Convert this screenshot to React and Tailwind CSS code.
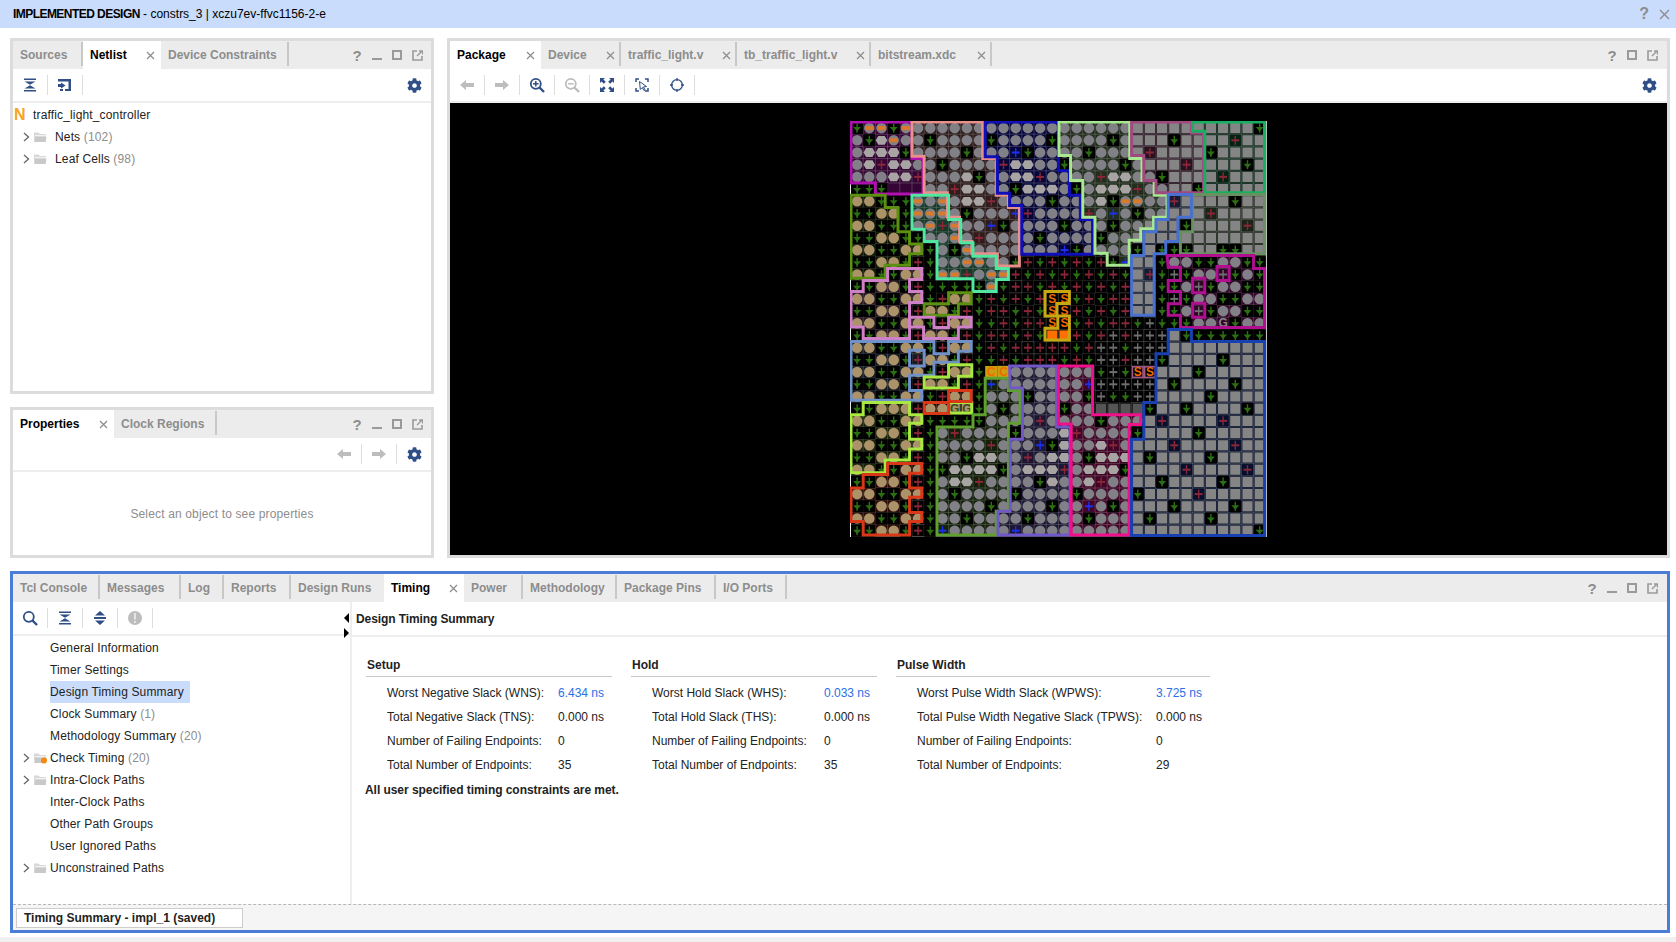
import React from "react";
import { FaCog } from "react-icons/fa";

const NAVY = "#2f4f86";
const P = 12.2;

// package balls, 34 x 34. g green, r red, w gray, b blue pins; o gray ball, H light ball,
// O tan ball, s square, a orange bar, S/C/G letters, E dark square, n empty
const ROWS = [
  "gaagaoooooooooooo" + "oooooossssssssssg",
  "ogHaoogoooogoooog" + "oooogosssgssssrss",
  "oHHHgoooogooobgoo" + "oogooosrssssgssss",
  "oHrHHoogoooorHHoo" + "goooogosssrssssgs",
  "oooHHroooHgooHHro" + "ooorHHoogssssrsss",
  "gggnnnoorHHoogHHH" + "ogoHHHroossgsssss",
  "OOgggaoaoHHroooog" + "oooHgaaoorssssgss",
  "ggOOgaaaogooobroo" + "oorobogoosssrssss",
  "OOgggoaraoobgoooo" + "gooogoosssgssssrs",
  "ggOOggooaoroooogo" + "ooogoosssssssssss",
  "OOggOOgogaooooooo" + "bgoooogsgggssggss",
  "ggOOgrgooaaoogrgr" + "grgrgbssgooggoogg",
  "OOggOOgaaroaargrg" + "rgrgrgsrgwgoowgog",
  "ggOOgrgggggagrrgr" + "grgrgrssggowgoogg",
  "OOggOOgrOOgrgrgrS" + "Sgrgrrssgwgooggoo",
  "ggOOgrOOgrgrrgrgS" + "Srgrgrssggowgoogg",
  "OOggOOgrOOggrgrrS" + "Sgrgrrgwgggooqgoo",
  "ggOOgrOOgrgrrgrgB" + "Brgrwrwwwsggggggg",
  "OOggOOgrOOgrgrrrr" + "rgrwwgwwwssssssss",
  "ggOOgrOOgrggrgrrr" + "grgwwrwwgssssgsss",
  "OOggOOgrOOgCCoooo" + "ooogwgmmsssgsssss",
  "ggOOgrOOgrgbooooo" + "oobwwwwwsgssssgss",
  "OOggOOgrOOgooogoo" + "oogwggwwssssgssss",
  "ggOOOrOOLLgogoooo" + "gooEEEEgssgssssgs",
  "OOggOOgggggooooro" + "ooogooosrssssrsss",
  "ggOOgrgoroooogooo" + "Hroooogssssgsssss",
  "OOggOOgoooorooobg" + "HooHrosssrssssrss",
  "ggOOgrgoogHHooroH" + "HogHHHsgssssgssss",
  "OOggOOggHHHHgoHHH" + "roHHHgssssrssssrs",
  "ggOOgrgoHHroooogH" + "ooHroossgssssgsss",
  "OOggOOgogoooogooo" + "ogoooogssssrsssss",
  "ggOOgrgoooogoooog" + "oobogosssgssssgss",
  "OOggOOgoogoooogoo" + "oogooosgssssgssss",
  "ggOOgrgbooooobooo" + "oooooossssssssssg",
];

// pblocks, in grid units
const REGIONS = [
  { c: "#b010b0", t: 0.3, p: [[0,0],[5,0],[5,3],[5.9,3],[5.9,5.9],[2,5.9],[2,5],[0,5]] },
  { c: "#e8908c", t: 0.2, p: [[5,0],[10.8,0],[10.8,3],[11.9,3],[11.9,6],[12.9,6],[12.9,7],[13.8,7],[13.8,11.8],[12,11.8],[12,10.8],[9.9,10.8],[9.9,9.8],[8.9,9.8],[8.9,7.8],[7.9,7.8],[7.9,5.8],[6,5.8],[6,2.8],[5,2.8]] },
  { c: "#1010b8", t: 0.32, p: [[11,0],[17,0],[17,4],[17.9,4],[17.9,6],[18.8,6],[18.8,8],[19.8,8],[19.8,10.85],[14,10.85],[14,6.85],[13,6.85],[13,5.85],[12,5.85],[12,2.85],[11,2.85]] },
  { c: "#a8e890", t: 0.2, p: [[17.05,0],[22.85,0],[22.85,3],[23.85,3],[23.85,4.8],[24.85,4.8],[24.85,6],[25.9,6],[25.9,7.8],[24.8,7.8],[24.8,8.75],[23.75,8.75],[23.75,9.7],[22.8,9.7],[22.8,11.75],[21,11.75],[21,10.75],[20,10.75],[20,7.8],[19,7.8],[19,4.8],[18,4.8],[18,2.75],[17.05,2.75]] },
  { c: "#a04880", t: 0.25, p: [[23,0],[27.9,0],[27.9,0.9],[28.9,0.9],[28.9,5.8],[25,5.8],[25,4.8],[24,4.8],[24,2.75],[23,2.75]] },
  { c: "#18b060", t: 0.2, p: [[28,0],[33.9,0],[33.9,5.8],[29,5.8],[29,0.75],[28,0.75]] },
  { c: "#689060", t: 0.25, p: [[28,5.95],[33.9,5.95],[33.9,10.8],[27,10.8],[27,9],[28,9]] },
  { c: "#4870d0", t: 0.25, p: [[26,5.95],[27.9,5.95],[27.9,7.8],[26.8,7.8],[26.8,9.8],[25.8,9.8],[25.8,10.8],[24.85,10.8],[24.85,15.85],[23,15.85],[23,10.95],[24,10.95],[24,9],[25,9],[25,8],[26,8]] },
  { c: "#b01090", t: 0.28, p: [[25.9,10.95],[33,10.95],[33,12],[33.9,12],[33.9,16.85],[27,16.85],[27,15.85],[26,15.85],[26,14.9],[27,14.9],[27,13.9],[26,13.9],[26,13],[27,13],[27,11.9],[26,11.9]] },
  { c: "#50e8a0", t: 0.25, p: [[5,6],[8,6],[8,8],[9,8],[9,9.9],[10,9.9],[10,11],[11.9,11],[11.9,12],[12.9,12],[12.9,12.9],[11.9,12.9],[11.9,13.9],[10,13.9],[10,12.85],[7.05,12.85],[7.05,9.8],[6,9.8],[6,8.8],[5,8.8]] },
  { c: "#5c9010", t: 0.15, p: [[0,6],[2.8,6],[2.8,7],[3.85,7],[3.85,9],[4.8,9],[4.8,10],[5.8,10],[5.8,10.8],[4.8,10.8],[4.8,11.75],[2.8,11.75],[2.8,12.8],[0,12.8]] },
  { c: "#5c9010", t: 0.15, p: [[8,14],[9.85,14],[9.85,14.9],[8.8,14.9],[8.8,15.85],[6,15.85],[6,14.9],[8,14.9]] },
  { c: "#d080c8", t: 0.18, p: [[0,13.9],[1,13.9],[1,13],[3,13],[3,12],[5.8,12],[5.8,12.9],[4.8,12.9],[4.8,13.9],[5.8,13.9],[5.8,14.8],[4.8,14.8],[4.8,17.75],[1,17.75],[1,16.8],[0,16.8]] },
  { c: "#d080c8", t: 0.18, p: [[4.8,16],[6.8,16],[6.8,16.85],[8,16.85],[8,16],[9.85,16],[9.85,16.8],[8.8,16.8],[8.8,17.75],[5.95,17.75],[5.95,16.8],[4.8,16.8]] },
  { c: "#7090c8", t: 0.18, p: [[0,18],[6.8,18],[6.8,19],[8,19],[8,18],[9.85,18],[9.85,18.8],[8.8,18.8],[8.8,19.7],[6.8,19.7],[6.8,20.75],[4.8,20.75],[4.8,22],[5.8,22],[5.8,22.8],[0,22.8]] },
  { c: "#7090c8", t: 0, p: [[4.8,18.7],[6,18.7],[6,20],[4.8,20]] },
  { c: "#a8e840", t: 0.15, p: [[1,23],[4.8,23],[4.8,24],[5.8,24],[5.8,24.7],[4.8,24.7],[4.8,26],[5.8,26],[5.8,26.8],[4.8,26.8],[4.8,27.7],[2.8,27.7],[2.8,28.75],[0,28.75],[0,24],[1,24]] },
  { c: "#a8e840", t: 0.15, p: [[8,19.9],[9.9,19.9],[9.9,20.85],[8.8,20.85],[8.8,21.8],[6,21.8],[6,20.9],[8,20.9]] },
  { c: "#a8e840", t: 0.15, p: [[8,23],[9.9,23],[9.9,23.85],[8,23.85]] },
  { c: "#d83818", t: 0.2, p: [[3,28],[5.8,28],[5.8,28.8],[4.8,28.8],[4.8,30],[5.8,30],[5.8,30.75],[4.8,30.75],[4.8,32],[5.8,32],[5.8,32.75],[4.8,32.75],[4.8,33.85],[1,33.85],[1,32.75],[0,32.75],[0,30],[1,30],[1,28.9],[3,28.9]] },
  { c: "#d83818", t: 0.2, p: [[8,22],[9.85,22],[9.85,22.9],[8,22.9]] },
  { c: "#d83818", t: 0.2, p: [[6,23],[8,23],[8,23.9],[6,23.9]] },
  { c: "#60a030", t: 0.2, p: [[11,21],[12.9,21],[12.9,22],[13.85,22],[13.85,24.7],[12.9,24.7],[12.9,31.9],[11.9,31.9],[11.9,33.85],[7.05,33.85],[7.05,25],[10,25],[10,24],[11,24]] },
  { c: "#7058c8", t: 0.25, p: [[13,20],[16.85,20],[16.85,25],[17.95,25],[17.95,33.85],[12.05,33.85],[12.05,31.9],[13.05,31.9],[13.05,26],[14.05,26],[14.05,21.8],[13.05,21.8]] },
  { c: "#f0108c", t: 0.28, p: [[17,20],[19.8,20],[19.8,24],[23.75,24],[23.75,24.8],[22.8,24.8],[22.8,33.85],[18.05,33.85],[18.05,24.75],[17,24.75]] },
  { c: "#1840b0", t: 0.25, p: [[26,17],[27.9,17],[27.9,18],[33.9,18],[33.9,33.9],[23,33.9],[23,26],[24,26],[24,23],[25,23],[25,19],[26,19]] },
  { c: "#c8a810", t: 0, p: [[15.9,13.9],[17.9,13.9],[17.9,14.87],[16.87,14.87],[16.87,15.9],[15.9,15.9]] },
  { c: "#c8a810", t: 0, p: [[16.95,15.9],[17.9,15.9],[17.9,17.87],[15.9,17.87],[15.9,16.9],[16.95,16.9]] },
  { c: "#b01090", t: 0, p: [[30,11.85],[31,11.85],[31,13],[30,13]] },
  { c: "#b01090", t: 0, p: [[28,12.8],[29,12.8],[29,14],[28,14]] },
  { c: "#b01090", t: 0, p: [[28,14.85],[29,14.85],[29,16],[28,16]] },
];

const Pin = ({ x, y, color }) => (
  <g fill={color}>
    <rect x={x - 0.7} y={y - 4.5} width={1.4} height={9} />
    <rect x={x - 4} y={y - 1} width={8} height={2} />
  </g>
);

const Letter = ({ x, y, children, color = "#f06a00" }) => (
  <text x={x} y={y + 4} textAnchor="middle" fontSize="12" fontWeight="700" fontFamily="Liberation Sans" fill={color}>
    {children}
  </text>
);

function Cell({ ch, c, r }) {
  const x = (c + 0.5) * P;
  const y = (r + 0.5) * P;
  const box = { x: c * P + 1, y: r * P + 1, width: P - 2, height: P - 2 };
  switch (ch) {
    case "g":
      return (
        <g>
          <rect x={c * P} y={r * P} width={P} height={P} fill="#000" />
          <rect x={x - 0.7} y={y - 4.5} width={1.4} height={9} fill="#2c6e12" />
          <path d={`M${x - 4} ${y - 1}h8l-4 4.5z`} fill="#2c6e12" />
        </g>
      );
    case "r":
      return <Pin x={x} y={y} color="#8a2638" />;
    case "w":
      return <Pin x={x} y={y} color="#6e6e6e" />;
    case "b":
      return <Pin x={x} y={y} color="#1c30f0" />;
    case "o":
      return <circle cx={x} cy={y} r={5.3} fill="#808086" />;
    case "H":
      return <path d={`M${x - 5.8} ${y}l2.6-4.4h6.4l2.6 4.4-2.6 4.4h-6.4z`} fill="#a8a4a4" />;
    case "O":
      return <circle cx={x} cy={y} r={5.3} fill="#ab9268" />;
    case "s":
      return <rect {...box} fill="#858585" />;
    case "E":
      return <rect {...box} fill="#555555" />;
    case "a":
      return (
        <g>
          <circle cx={x} cy={y} r={5.3} fill="#808086" />
          <rect x={x - 4} y={y - 2} width={8} height={4} fill="#d87a2c" />
        </g>
      );
    case "S":
      return <Letter x={x} y={y}>S</Letter>;
    case "B":
      return <rect {...box} fill="#ff7000" />;
    case "C":
      return (
        <g>
          <rect x={c * P} y={r * P} width={P} height={P} fill="#c8a010" />
          <Letter x={x} y={y}>C</Letter>
        </g>
      );
    case "m":
      return (
        <g>
          <rect x={c * P} y={r * P} width={P} height={P} fill="#a05888" />
          <rect x={x - 4.5} y={y - 4.5} width={9} height={9} fill="#000" />
          <Letter x={x} y={y}>S</Letter>
        </g>
      );
    case "L":
      return (
        <g>
          <rect {...box} fill="#a89468" />
          <Letter x={x} y={y} color="#3c4a20">G</Letter>
        </g>
      );
    case "q":
      return <Letter x={x} y={y} color="#88888c">G</Letter>;
    default:
      return null;
  }
}

function PackageMap() {
  const size = 34 * P;
  const pts = (p) => p.map(([a, b]) => `${a * P},${b * P}`).join(" ");
  const lines = [];
  for (let i = 0; i <= 34; i++) lines.push(i * P);
  return (
    <svg width={size + 2} height={size + 2} viewBox={`-1 -1 ${size + 2} ${size + 2}`} className="block">
      <rect x="-1" y="-1" width={size + 2} height={size + 2} fill="#fff" />
      <rect x="0" y="0" width={size} height={size} fill="#000" />
      {REGIONS.map((reg, i) => (
        <polygon key={i} points={pts(reg.p)} fill={reg.c} fillOpacity={reg.t} />
      ))}
      {lines.map((v) => (
        <g key={v} stroke="#8a8a8a" strokeOpacity="0.38" strokeWidth="1">
          <line x1={v} y1="0" x2={v} y2={size} />
          <line x1="0" y1={v} x2={size} y2={v} />
        </g>
      ))}
      {ROWS.map((row, r) => row.split("").map((ch, c) => <Cell key={`${r}-${c}`} ch={ch} c={c} r={r} />))}
      {REGIONS.map((reg, i) => (
        <polygon key={i} points={pts(reg.p)} fill="none" stroke={reg.c} strokeWidth="3" />
      ))}
    </svg>
  );
}

const Svg = ({ children, w = 16, h = 16 }) => (
  <svg width={w} height={h} viewBox={`0 0 ${w} ${h}`} className="block">
    {children}
  </svg>
);

const CollapseIcon = () => (
  <Svg>
    <path d="M2 1.5h12v1.6H2zM2 12.9h12v1.6H2z M2.5 4.4h11L8 7.8z M8 8.2l5.5 3.4h-11z" fill={NAVY} />
  </Svg>
);
const ExpandIcon = () => (
  <Svg>
    <path d="M8 1l5 4.5H3zM8 15l-5-4.5h10zM2 7.1h12v1.8H2z" fill={NAVY} />
  </Svg>
);
const SchematicIcon = () => (
  <Svg>
    <path d="M1 2h13v12H8v-2h3.5V4.5H1zM4 5.5l4.5 3-4.5 3V10H1V7h3zM3 12h3v2H3z" fill={NAVY} />
  </Svg>
);
const SearchIcon = ({ color = NAVY, sign = "" }) => (
  <Svg>
    <circle cx="6.8" cy="6.8" r="5" fill="none" stroke={color} strokeWidth="1.8" />
    <path d="M10.5 10.5L15 15" stroke={color} strokeWidth="2.4" />
    {sign && <path d={sign} stroke={color} strokeWidth="1.5" />}
  </Svg>
);
const ArrowIcon = ({ flip }) => (
  <Svg w={14} h={10}>
    <path d={flip ? "M0 3h8V0l6 5-6 5V7H0z" : "M14 3H6V0L0 5l6 5V7h8z"} fill="#bdbdbd" />
  </Svg>
);
const FitIcon = () => (
  <Svg>
    <path d="M1 1h5L4.4 2.6l2.4 2.2-2 2-2.2-2.4L1 6zM15 1v5l-1.6-1.6-2.2 2.4-2-2 2.4-2.2L10 1zM1 15v-5l1.6 1.6 2.2-2.4 2 2-2.4 2.2L6 15zM15 15h-5l1.6-1.6-2.4-2.2 2-2 2.2 2.4L15 10z" fill={NAVY} />
  </Svg>
);
const SelectAreaIcon = () => (
  <Svg>
    <path d="M5 2H2v3M11 2h3v3M5 14H2v-3M14 11v3h-3" fill="none" stroke={NAVY} strokeWidth="1.5" />
    <path d="M5.5 4.5l7 5-3 .4 1.6 3-1.2.6-1.6-3-2 2z" fill="#fff" stroke={NAVY} strokeWidth="1" />
  </Svg>
);
const TargetIcon = () => (
  <Svg>
    <circle cx="8" cy="8" r="5.4" fill="none" stroke={NAVY} strokeWidth="1.3" />
    <path d="M8 1v3M8 12v3M1 8h3M12 8h3" stroke={NAVY} strokeWidth="1.3" />
  </Svg>
);
const AlertIcon = () => (
  <Svg>
    <circle cx="8" cy="8" r="7" fill="#bdbdbd" />
    <path d="M7 3h2v6.5H7zM7 11h2v2H7z" fill="#e4e4e4" />
  </Svg>
);
const Gear = () => <FaCog size={15} color={NAVY} />;

const Sep = () => <span className="w-px h-[20px] bg-[#dddddd] shrink-0" />;

const ToolCell = ({ children }) => (
  <span className="w-[34px] flex items-center justify-center shrink-0">{children}</span>
);

function CloseX() {
  return (
    <svg width="9" height="9" viewBox="0 0 9 9" className="block shrink-0">
      <path d="M1 1l7 7M8 1l-7 7" stroke="#8c8c8c" strokeWidth="1.2" />
    </svg>
  );
}

function Tabs({ tabs, noMin, narrow }) {
  return (
    <div className="flex h-[28px] bg-[#ececec] shrink-0">
      {tabs.map((t) => (
        <div
          key={t.label}
          style={{ width: t.w }}
          className={`flex items-center h-full pl-[7px] pr-[6px] text-[12px] font-bold shrink-0 ${
            t.active ? "bg-white text-black" : "text-[#8d8d8d]"
          }`}
        >
          <span className="flex-1 whitespace-nowrap">{t.label}</span>
          {t.close && <CloseX />}
          {t.sep && <span className="w-[2px] h-[24px] -mr-[6px] ml-[4px] -mt-[3px] bg-[#c8c8c8]" />}
        </div>
      ))}
      <WindowControls noMin={noMin} narrow={narrow} />
    </div>
  );
}

function WindowControls({ noMin, narrow }) {
  return (
    <div className={`ml-auto flex items-center ${narrow ? "pr-[4px]" : "pr-[5px]"}`}>
      <span className="w-[20px] text-center text-[15px] font-bold text-[#8d8d8d] leading-none">?</span>
      {!noMin && (
        <span className="w-[20px] flex justify-center pt-[8px]">
          <span className="w-[10px] h-[2px] bg-[#9a9a9a]" />
        </span>
      )}
      <span className="w-[20px] flex justify-center">
        <span className="w-[10px] h-[10px] border-2 border-[#9a9a9a]" />
      </span>
      <span className="w-[20px] flex justify-center">
        <svg width="11" height="11" viewBox="0 0 11 11" className="block">
          <path d="M5 1H1v9h9V6" fill="none" stroke="#9a9a9a" strokeWidth="1.6" />
          <path d="M5 6l5-5M7 1h3.5v3.5" fill="none" stroke="#9a9a9a" strokeWidth="1.4" />
        </svg>
      </span>
    </div>
  );
}

const Toolbar = ({ children }) => (
  <div className="flex items-center h-[32px] border-b-2 border-[#eeeeee] box-content shrink-0">{children}</div>
);

function Folder({ dot }) {
  return (
    <svg width="13" height="12" viewBox="0 0 13 12" className="block">
      <path d="M0 1.5h4.5L6 3h6v8H0z" fill="#d8d8d8" />
      <path d="M1 4h11v1H1z" fill="#f2f2f2" />
      <path d="M1 6h11.5l-1 5H1z" fill="#c9c9c9" />
      {dot && <circle cx="10" cy="8.5" r="3" fill="#f08a10" />}
    </svg>
  );
}

function Chevron() {
  return (
    <svg width="7" height="10" viewBox="0 0 7 10" className="block">
      <path d="M1 1l4.5 4L1 9" fill="none" stroke="#666666" strokeWidth="1.3" />
    </svg>
  );
}

function TreeRow({ label, count, folder, dot, lead = 37, selected }) {
  return (
    <div className="flex items-center h-[22px] text-[12px] tracking-[0.15px] text-[#222222]">
      <span style={{ width: lead }} className="flex items-center shrink-0 pl-[10px]">
        {folder && (
          <>
            <Chevron />
            <span className="ml-[4px]">
              <Folder dot={dot} />
            </span>
          </>
        )}
      </span>
      <span className={`h-[22px] leading-[22px] whitespace-nowrap ${selected ? "bg-[#c9dcfb] w-[140px]" : ""}`}>
        {label}
        {count && <span className="text-[#8d8d8d]"> {count}</span>}
      </span>
    </div>
  );
}

function TimingSection({ title, width, labelWidth, rows }) {
  return (
    <div style={{ width }} className="shrink-0">
      <div className="h-[22px] leading-[21px] border-b border-[#c8c8c8] text-[12px] font-bold text-[#222222] pl-px">{title}</div>
      <div className="pt-[4px] pl-[21px]">
        {rows.map(([label, value, link]) => (
          <div key={label} className="flex h-[24px] items-center text-[12px] text-[#222222]">
            <span style={{ width: labelWidth }} className="shrink-0 whitespace-nowrap">{label}</span>
            <span className={link ? "text-[#2a6fe8]" : ""}>{value}</span>
          </div>
        ))}
      </div>
    </div>
  );
}

const Panel = ({ className, children }) => (
  <div className={`flex flex-col border-[3px] border-[#dcdcdc] bg-white ${className}`}>{children}</div>
);

export default function App() {
  return (
    <div className="w-[1676px] h-[942px] bg-white flex flex-col overflow-hidden font-['Liberation_Sans',sans-serif]">
      <div className="h-[28px] bg-[#c9dcfb] flex items-center pl-[13px] pr-[6px] text-[12px] text-black shrink-0">
        <span>
          <b className="tracking-[-0.55px]">IMPLEMENTED DESIGN</b> - constrs_3 | xczu7ev-ffvc1156-2-e
        </span>
        <span className="ml-auto text-[16px] font-bold text-[#8d8d8d] leading-none">?</span>
        <svg width="11" height="11" viewBox="0 0 11 11" className="block ml-[10px]">
          <path d="M1 1l9 9M10 1l-9 9" stroke="#8d8d8d" strokeWidth="1.4" />
        </svg>
      </div>

      <div className="flex gap-[13px] mt-[10px] mx-[10px] mr-[6px] h-[520px] shrink-0">
        <div className="w-[424px] flex flex-col gap-[13px] shrink-0">
          <Panel className="h-[356px]">
            <Tabs
              narrow
              tabs={[
                { label: "Sources", w: 70, sep: true },
                { label: "Netlist", w: 78, active: true, close: true },
                { label: "Device Constraints", w: 128, sep: true },
              ]}
            />
            <Toolbar>
              <ToolCell><CollapseIcon /></ToolCell>
              <Sep />
              <ToolCell><SchematicIcon /></ToolCell>
              <Sep />
              <span className="ml-auto w-[34px] flex justify-center"><Gear /></span>
            </Toolbar>
            <div className="pt-px">
              <div className="flex items-center h-[22px] text-[12px] tracking-[0.15px] text-[#222222]">
                <span className="w-[20px] pl-[1px] text-[16px] font-bold text-[#f5a623] leading-none">N</span>
                traffic_light_controller
              </div>
              <TreeRow label="Nets" count="(102)" folder lead={42} />
              <TreeRow label="Leaf Cells" count="(98)" folder lead={42} />
            </div>
          </Panel>
          <Panel className="flex-1">
            <Tabs
              narrow
              tabs={[
                { label: "Properties", w: 101, active: true, close: true },
                { label: "Clock Regions", w: 103, sep: true },
              ]}
            />
            <Toolbar>
              <span className="ml-auto" />
              <ToolCell><ArrowIcon /></ToolCell>
              <Sep />
              <ToolCell><ArrowIcon flip /></ToolCell>
              <Sep />
              <ToolCell><Gear /></ToolCell>
            </Toolbar>
            <div className="flex-1 flex items-center justify-center text-[12px] tracking-[0.15px] text-[#8d8d8d]">
              Select an object to see properties
            </div>
          </Panel>
        </div>

        <Panel className="flex-1">
          <Tabs
            noMin
            tabs={[
              { label: "Package", w: 91, active: true, close: true },
              { label: "Device", w: 80, close: true, sep: true },
              { label: "traffic_light.v", w: 116, close: true, sep: true },
              { label: "tb_traffic_light.v", w: 134, close: true, sep: true },
              { label: "bitstream.xdc", w: 121, close: true, sep: true },
            ]}
          />
          <Toolbar>
            <ToolCell><ArrowIcon /></ToolCell>
            <Sep />
            <ToolCell><ArrowIcon flip /></ToolCell>
            <Sep />
            <ToolCell><SearchIcon sign="M4 6.8h5.6M6.8 4v5.6" /></ToolCell>
            <Sep />
            <ToolCell><SearchIcon color="#bdbdbd" sign="M4 6.8h5.6" /></ToolCell>
            <Sep />
            <ToolCell><FitIcon /></ToolCell>
            <Sep />
            <ToolCell><SelectAreaIcon /></ToolCell>
            <Sep />
            <ToolCell><TargetIcon /></ToolCell>
            <Sep />
            <span className="ml-auto w-[36px] flex justify-center"><Gear /></span>
          </Toolbar>
          <div className="flex-1 bg-black flex items-center justify-center min-h-0">
            <PackageMap />
          </div>
        </Panel>
      </div>

      <div className="mt-[13px] mx-[10px] mr-[6px] h-[362px] shrink-0 flex flex-col border-[3px] border-[#4a7dd6] bg-white">
        <Tabs
          tabs={[
            { label: "Tcl Console", w: 87, sep: true },
            { label: "Messages", w: 81, sep: true },
            { label: "Log", w: 43, sep: true },
            { label: "Reports", w: 67, sep: true },
            { label: "Design Runs", w: 93 },
            { label: "Timing", w: 80, active: true, close: true },
            { label: "Power", w: 59, sep: true },
            { label: "Methodology", w: 94, sep: true },
            { label: "Package Pins", w: 99, sep: true },
            { label: "I/O Ports", w: 71, sep: true },
          ]}
        />
        <div className="flex flex-1 min-h-0">
          <div className="relative w-[337px] shrink-0 border-r-2 border-[#eeeeee] box-content">
            <Toolbar>
              <ToolCell><SearchIcon /></ToolCell>
              <Sep />
              <ToolCell><CollapseIcon /></ToolCell>
              <Sep />
              <ToolCell><ExpandIcon /></ToolCell>
              <Sep />
              <ToolCell><AlertIcon /></ToolCell>
              <Sep />
            </Toolbar>
            <div className="pt-px">
              <TreeRow label="General Information" />
              <TreeRow label="Timer Settings" />
              <TreeRow label="Design Timing Summary" selected />
              <TreeRow label="Clock Summary" count="(1)" />
              <TreeRow label="Methodology Summary" count="(20)" />
              <TreeRow label="Check Timing" count="(20)" folder dot />
              <TreeRow label="Intra-Clock Paths" folder />
              <TreeRow label="Inter-Clock Paths" />
              <TreeRow label="Other Path Groups" />
              <TreeRow label="User Ignored Paths" />
              <TreeRow label="Unconstrained Paths" folder />
            </div>
            <span className="absolute right-[1px] top-[11px] border-y-[5px] border-y-transparent border-r-[5px] border-r-black" />
            <span className="absolute right-[1px] top-[26px] border-y-[5px] border-y-transparent border-l-[5px] border-l-black" />
          </div>
          <div className="flex-1 min-w-0">
            <div className="h-[32px] box-content border-b-2 border-[#eeeeee] flex items-center pl-[4px] pt-px text-[12px] font-bold tracking-[-0.1px] text-[#222222]">
              Design Timing Summary
            </div>
            <div className="pt-[18px] pl-[14px] flex gap-[19px]">
              <TimingSection
                title="Setup"
                width={246}
                labelWidth={171}
                rows={[
                  ["Worst Negative Slack (WNS):", "6.434 ns", true],
                  ["Total Negative Slack (TNS):", "0.000 ns"],
                  ["Number of Failing Endpoints:", "0"],
                  ["Total Number of Endpoints:", "35"],
                ]}
              />
              <TimingSection
                title="Hold"
                width={246}
                labelWidth={172}
                rows={[
                  ["Worst Hold Slack (WHS):", "0.033 ns", true],
                  ["Total Hold Slack (THS):", "0.000 ns"],
                  ["Number of Failing Endpoints:", "0"],
                  ["Total Number of Endpoints:", "35"],
                ]}
              />
              <TimingSection
                title="Pulse Width"
                width={314}
                labelWidth={239}
                rows={[
                  ["Worst Pulse Width Slack (WPWS):", "3.725 ns", true],
                  ["Total Pulse Width Negative Slack (TPWS):", "0.000 ns"],
                  ["Number of Failing Endpoints:", "0"],
                  ["Total Number of Endpoints:", "29"],
                ]}
              />
            </div>
            <div className="pl-[13px] pt-[4px] text-[12px] font-bold tracking-[-0.05px] text-[#222222]">All user specified timing constraints are met.</div>
          </div>
        </div>
        <div className="h-[26px] shrink-0 border-t border-dashed border-[#b8b8b8] bg-[#f5f5f5] pl-[3px] pt-[3px]">
          <div className="w-[227px] h-[20px] border border-[#cccccc] bg-white pl-[7px] text-[12px] font-bold text-[#222222] leading-[19px]">
            Timing Summary - impl_1 (saved)
          </div>
        </div>
      </div>
      <div className="mt-[4px] flex-1 bg-[#f0f0f0]" />
    </div>
  );
}
